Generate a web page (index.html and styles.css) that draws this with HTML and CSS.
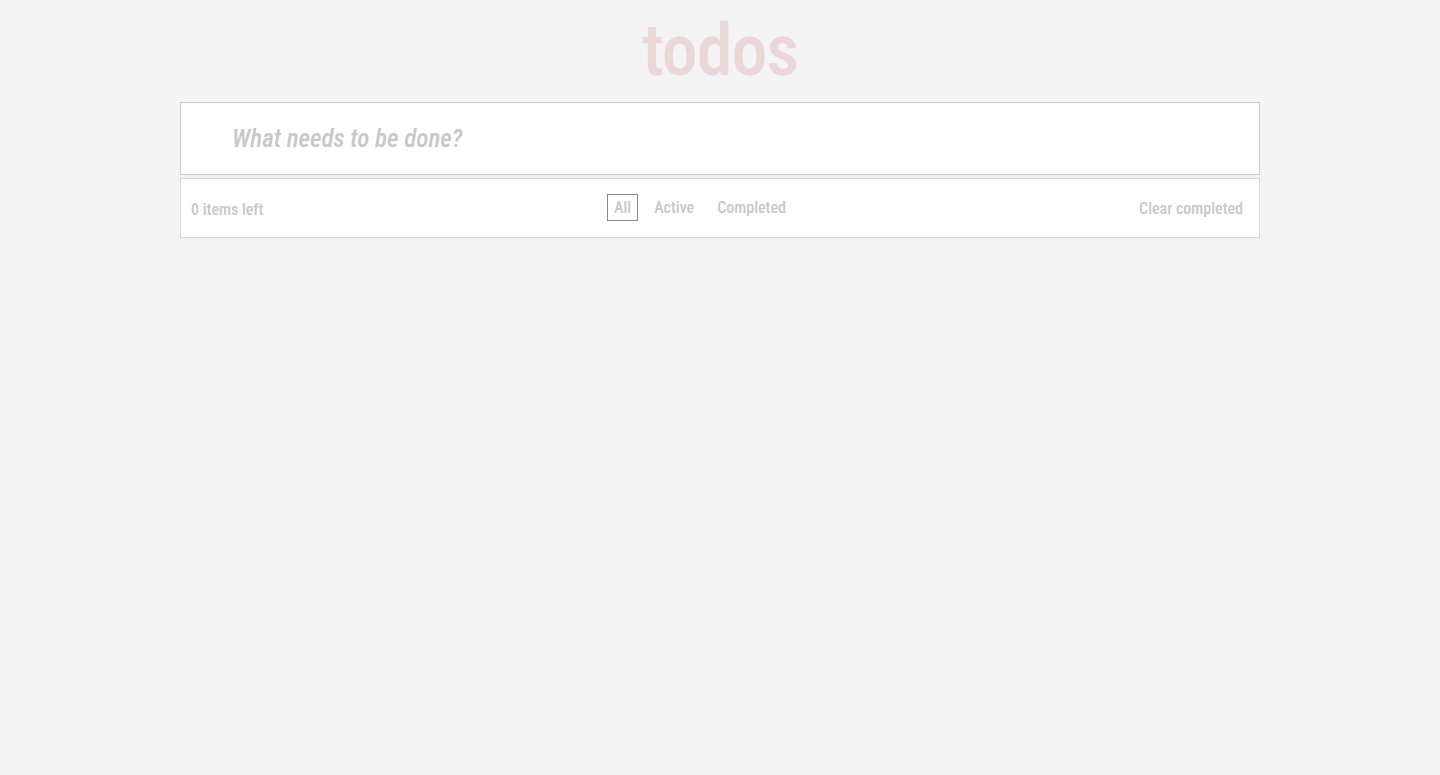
FILE: index.html
```html
<!DOCTYPE html>
<html lang="en">
<head>
<meta charset="utf-8">
<title>todos</title>
<link rel="stylesheet" href="styles.css">
</head>
<body>
<section class="todoapp">
  <header class="header">
    <h1 class="title">todos</h1>
    <input class="new-todo" type="text" placeholder="What needs to be done?">
  </header>
  <footer class="footer">
    <span class="count">0 items left</span>
    <ul class="filters">
      <li><a class="filter selected">All</a></li>
      <li><a class="filter">Active</a></li>
      <li><a class="filter">Completed</a></li>
    </ul>
    <button class="clear">Clear completed</button>
  </footer>
</section>
</body>
</html>
```

FILE: styles.css
```css
html, body {
  margin: 0;
  padding: 0;
}
body {
  background: #f4f4f4;
  font-family: Roboto, "Liberation Sans", sans-serif;
  font-stretch: condensed;
  color: #ccc;
  height: 775px;
}
.todoapp {
  width: 1080px;
  margin: 0 auto;
  display: flex;
  flex-direction: column;
}
.header {
  display: flex;
  flex-direction: column;
}
.title {
  margin: 0;
  text-align: center;
  font-size: 72px;
  font-weight: 500;
  line-height: 102px;
  height: 102px;
  color: #ead7d7;
  letter-spacing: -1px;
}
.new-todo {
  box-sizing: border-box;
  height: 73px;
  width: 100%;
  margin: 0;
  border: 1px solid #c9c9c9;
  background: #fff;
  padding: 0 20px 0 51px;
  font-family: inherit;
  font-stretch: condensed;
  font-size: 25px;
  outline: none;
}
.new-todo::placeholder {
  color: #c8c8c8;
  font-style: italic;
  font-weight: 500;
}
.footer {
  box-sizing: border-box;
  margin-top: 3px;
  height: 60px;
  background: #fff;
  border: 1px solid #d8d8d8;
  display: grid;
  grid-template-columns: 1fr auto 1fr;
  align-items: center;
  padding: 0 16px 0 10px;
  font-size: 16px;
  font-weight: 500;
}
.count {
  color: #c8c8c8;
  padding-top: 2px;
}
.filters {
  list-style: none;
  margin: -1px 34px 0 0;
  padding: 0;
  display: flex;
  gap: 9px;
}
.filter {
  display: block;
  padding: 3px 6px;
  border: 1px solid transparent;
  color: #c8c8c8;
}
.filter.selected {
  border-color: #8a8a8a;
}
.clear {
  justify-self: end;
  background: none;
  border: 0;
  padding: 0;
  font: inherit;
  font-stretch: condensed;
  color: #c8c8c8;
}
```
